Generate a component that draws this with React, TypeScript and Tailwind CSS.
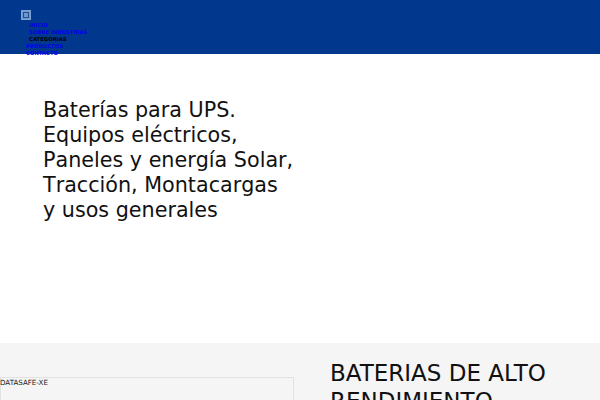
const navItems = [
  { label: "INICIO", cls: "pl-[8px] text-[#0000ee]" },
  { label: "SOBRE INDUSTRIAS", cls: "pl-[8px] text-[#0000ee]" },
  { label: "CATEGORIAS", cls: "pl-[8px] text-black" },
  { label: "PRODUCTOS", cls: "pl-[5px] text-[#0000ee]" },
  { label: "CONTACTO", cls: "pl-[5px] text-[#0000ee]" },
];

const App = () => {
  return (
    <div className="h-[400px] w-[600px] overflow-hidden bg-white font-['DejaVu_Sans',sans-serif]">
      {/* Header */}
      <header className="h-[54px] bg-[#01378c] pl-[21px] pt-[10px]">
        <div className="flex h-[10px] w-[10px] items-center justify-center border border-[#7fa2d0] bg-[#6d97cc]">
          <div className="h-[6px] w-[6px] border border-[#1f4f96]" />
        </div>
        <nav className="mt-[2px] flex flex-col">
          {navItems.map((item) => (
            <a
              key={item.label}
              className={`h-[7px] text-[5.3px] leading-[7px] font-semibold ${item.cls}`}
            >
              {item.label}
            </a>
          ))}
        </nav>
      </header>

      {/* Hero */}
      <section className="h-[289px] pl-[43px] pt-[44px]">
        <h1 className="text-[20.7px] leading-[25px] text-[#111] [font-kerning:none]">
          Baterías para UPS.
          <br />
          Equipos eléctricos,
          <br />
          Paneles y energía Solar,
          <br />
          Tracción, Montacargas
          <br />
          y usos generales
        </h1>
      </section>

      {/* Product */}
      <section className="flex h-[57px] overflow-hidden bg-[#f5f5f5]">
        <div className="mt-[34px] h-[40px] w-[294px] shrink-0 pt-px text-[7.1px] leading-[10px] text-[#222] shadow-[inset_0_0_0_1px_#e2e2e2]">
          DATASAFE-XE
        </div>
        <h2 className="ml-[36px] pt-[17px] text-[23px] leading-[27.6px] text-[#111]">
          BATERIAS DE ALTO
          <br />
          RENDIMIENTO
        </h2>
      </section>
    </div>
  );
};

export default App;
